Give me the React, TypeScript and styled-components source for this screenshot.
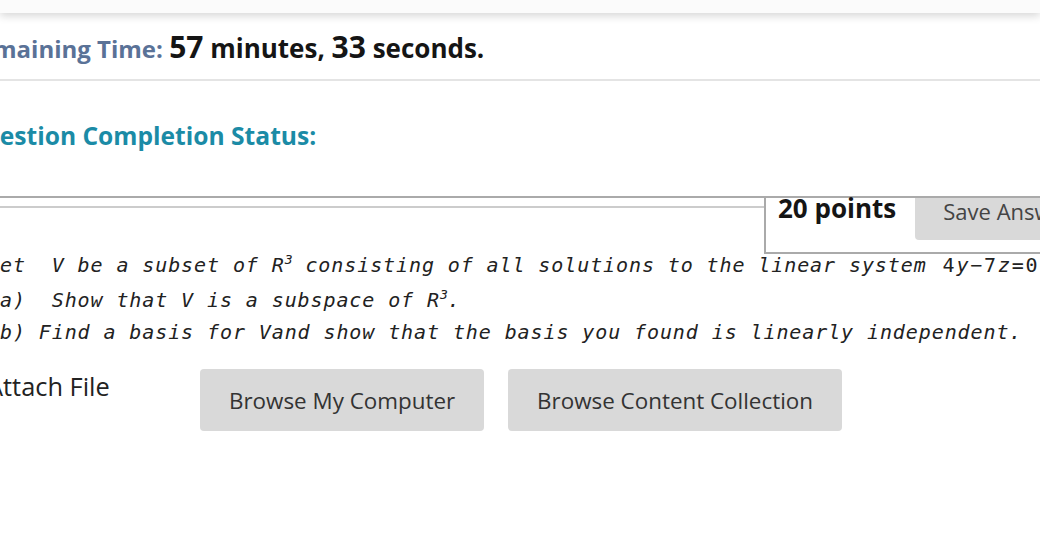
import React from 'react';
import styled, { createGlobalStyle } from 'styled-components';

const GlobalStyle = createGlobalStyle`
  html, body {
    margin: 0;
    padding: 0;
    background: #fff;
    overflow: hidden;
  }
  body {
    font-family: 'Open Sans', 'Liberation Sans', sans-serif;
    color: #222;
  }
`;

const TopBar = styled.div`
  height: 13px;
  background: #fbfbfb;
  box-shadow: 0 3px 9px rgba(0, 0, 0, 0.16);
  position: relative;
  z-index: 1;
`;

const Page = styled.div`
  width: 1140px;
  margin-left: -40px;
`;

const TimerRow = styled.div`
  padding: 17px 0 13px 3px;
  border-bottom: 2px solid #e4e4e4;
  font-weight: 700;
  font-size: 24px;
  line-height: 34px;
  white-space: nowrap;
`;

const TimerLabel = styled.span`
  color: #5a7297;
`;

const TimerValue = styled.span`
  color: #151515;
  font-size: 26px;
`;

const TimerNumber = styled.span`
  font-size: 30px;
`;

const StatusTitle = styled.h2`
  margin: 0;
  padding: 38px 0 0 4px;
  height: 79px;
  box-sizing: border-box;
  font-size: 24.6px;
  line-height: 34px;
  font-weight: 700;
  color: #1b8ba6;
`;

const QuestionHeader = styled.div`
  display: flex;
  align-items: flex-start;
  border-top: 2px solid #aaa;
  margin-top: 36px;
`;

const HeaderRule = styled.div`
  flex: 1;
  height: 8px;
  border-bottom: 2px solid #cccccc;
`;

const PointsBox = styled.div`
  display: flex;
  align-items: flex-start;
  gap: 19px;
  width: 322px;
  height: 54px;
  padding-left: 12px;
  border-left: 2px solid #aaa;
  border-bottom: 2px solid #aaa;
`;

const Points = styled.span`
  font-size: 26px;
  font-weight: 700;
  line-height: 20px;
  color: #151515;
  white-space: nowrap;
`;

const SaveButton = styled.button`
  height: 42px;
  box-sizing: border-box;
  padding: 0 29px 22px 28px;
  border: none;
  border-radius: 0 0 0 4px;
  background: #d9d9d9;
  font-family: 'Open Sans', 'Liberation Sans', sans-serif;
  font-size: 22px;
  line-height: 26px;
  color: #444;
  white-space: nowrap;
  flex: 1;
  text-align: left;
`;

const QuestionBody = styled.div`
  margin-top: -5px;
  padding-left: 27px;
  font-family: 'DejaVu Sans Mono', 'Liberation Mono', monospace;
  font-style: italic;
  font-size: 20px;
  letter-spacing: 0.9px;
  color: #222;
`;

const QuestionLine = styled.p<{ $gap?: number }>`
  margin: ${({ $gap }) => ($gap ?? 0) + 'px'} 0 0;
  line-height: 32px;
  white-space: pre;
`;

const Sup = styled.sup`
  font-size: 13px;
  letter-spacing: 0;
  line-height: 0;
`;

const Equation = styled.span`
  letter-spacing: 1.8px;
  margin-left: 3px;
`;

const Upright = styled.span`
  font-style: normal;
`;

const AttachRow = styled.div`
  display: flex;
  align-items: flex-start;
  margin-top: 21px;
  padding-left: 27px;
`;

const AttachLabel = styled.span`
  width: 213px;
  font-size: 25.4px;
  line-height: 34px;
  color: #222;
`;

const BrowseButton = styled.button`
  height: 62px;
  padding: 0 29px;
  margin-right: 24px;
  border: none;
  border-radius: 4px;
  background: #d9d9d9;
  font-family: 'Open Sans', 'Liberation Sans', sans-serif;
  font-size: 22.4px;
  color: #333;
`;

export default function App() {
  return (
    <>
      <GlobalStyle />
      <TopBar />
      <Page>
        <TimerRow>
          <TimerLabel>Remaining Time: </TimerLabel>
          <TimerValue>
            <TimerNumber>57</TimerNumber> minutes, <TimerNumber>33</TimerNumber> seconds.
          </TimerValue>
        </TimerRow>
        <StatusTitle>Question Completion Status:</StatusTitle>
        <QuestionHeader>
          <HeaderRule />
          <PointsBox>
            <Points>20 points</Points>
            <SaveButton>Save Answer</SaveButton>
          </PointsBox>
        </QuestionHeader>
        <QuestionBody>
          <QuestionLine>
            Let  V be a subset of R<Sup>3</Sup> consisting of all solutions to the linear system{' '}
            <Equation>
              <Upright>4</Upright>y<Upright>−7</Upright>z<Upright>=0</Upright>
            </Equation>
          </QuestionLine>
          <QuestionLine $gap={3}>
            (a)  Show that V is a subspace of R<Sup>3</Sup>.
          </QuestionLine>
          <QuestionLine>
            (b) Find a basis for Vand show that the basis you found is linearly independent.
          </QuestionLine>
        </QuestionBody>
        <AttachRow>
          <AttachLabel>Attach File</AttachLabel>
          <BrowseButton>Browse My Computer</BrowseButton>
          <BrowseButton>Browse Content Collection</BrowseButton>
        </AttachRow>
      </Page>
    </>
  );
}
